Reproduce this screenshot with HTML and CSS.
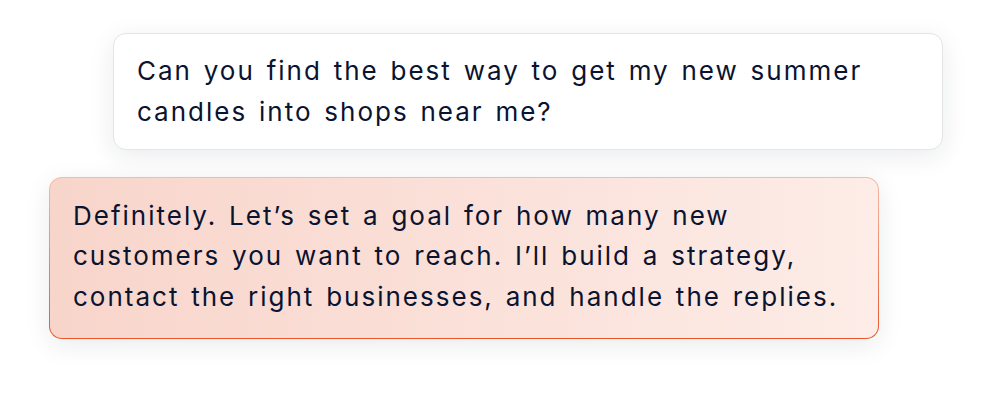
FILE: index.html
```html
<!DOCTYPE html>
<html>
<head>
<meta charset="utf-8">
<link rel="stylesheet" href="styles.css">
</head>
<body>
<div class="chat">
  <div class="bubble user">Can you find the best way to get my new summer<br>candles into shops near me?</div>
  <div class="bubble agent">Definitely. Let’s set a goal for how many new<br>customers you want to reach. I’ll build a strategy,<br>contact the right businesses, and handle the replies.</div>
</div>
</body>
</html>
```

FILE: styles.css
```css
html, body {
  margin: 0;
  padding: 0;
  background: #ffffff;
}
body {
  width: 992px;
  height: 404px;
  overflow: hidden;
  font-family: Inter, "Noto Sans", sans-serif;
  color: #0a1330;
}
.chat {
  display: flex;
  flex-direction: column;
  gap: 27px;
  padding-top: 33px;
}
.bubble {
  box-sizing: border-box;
  width: 830px;
  font-size: 26px;
  font-weight: 430;
  line-height: 40.5px;
  border-radius: 13px;
  letter-spacing: 2px;
  word-spacing: 2.5px;
  white-space: nowrap;
}
.user {
  margin-left: 113px;
  height: 117px;
  padding: 17px 23px 0;
  background: #ffffff;
  border: 1px solid #e3e5e9;
  box-shadow: 0 6px 26px rgba(20, 30, 60, 0.09);
}
.agent {
  margin-left: 49px;
  height: 162px;
  padding: 17.5px 23px 0;
  border: 1.5px solid transparent;
  background:
    linear-gradient(90deg, #f8d5cb, #fdece7) padding-box,
    linear-gradient(180deg, #f5bba9, #e8562b) border-box;
  box-shadow: 0 6px 26px rgba(20, 30, 60, 0.09);
}
```
